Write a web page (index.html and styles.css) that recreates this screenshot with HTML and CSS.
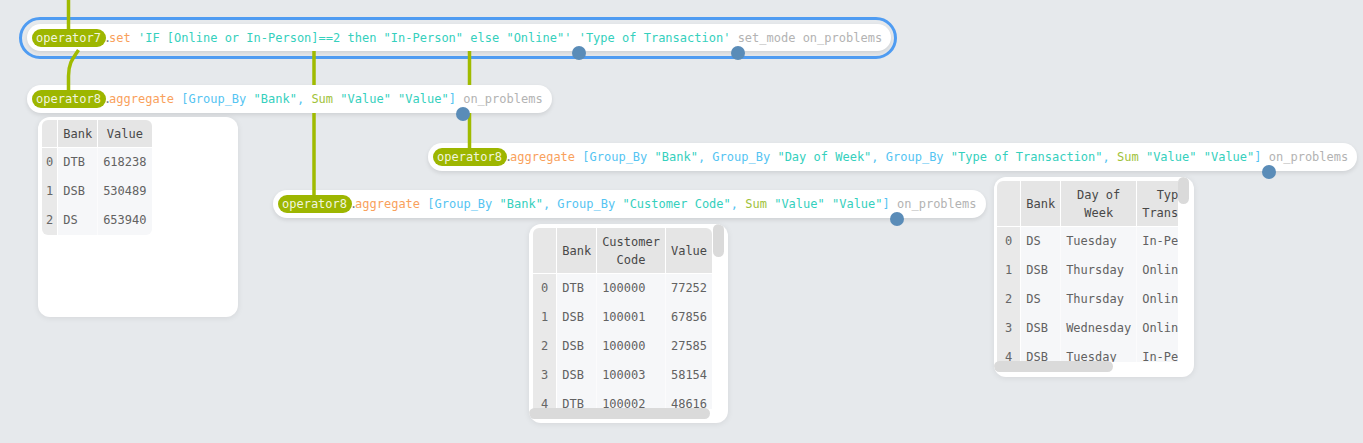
FILE: index.html
```html
<!DOCTYPE html>
<html>
<head>
<meta charset="utf-8">
<title>Graph</title>
<link rel="stylesheet" href="styles.css">
</head>
<body>
<div class="canvas">
  <div class="ring"></div>
  <svg class="edges" width="1363" height="443" viewBox="0 0 1363 443">
    <path d="M68.5 0 V32"/>
    <path d="M78.5 50 C74 57 68.5 62 68.5 76 V93"/>
    <path d="M314 51 V85 M314 113 V197"/>
    <path d="M469.5 51 V85 M469.5 113 V150"/>
  </svg>

  <div class="node n7"><span class="label">operator7</span><span class="dot">.</span><span class="code"><span class="kw">set</span> <span class="str">'IF [Online or In-Person]==2 then "In-Person" else "Online"'</span> <span class="port"></span><span class="str">'Type of Transaction'</span> <span class="port"></span><span class="mute">set_mode on_problems</span></span></div>

  <div class="node n8a"><span class="label">operator8</span><span class="dot">.</span><span class="code"><span class="kw">aggregate</span> <span class="br">[Group_By</span> <span class="str">"Bank"</span><span class="br">, </span><span class="sum">Sum</span> <span class="str">"Value"</span> <span class="str">"Value"</span><span class="br">]</span> <span class="port"></span><span class="mute">on_problems</span></span></div>

  <div class="node n8b"><span class="label">operator8</span><span class="dot">.</span><span class="code"><span class="kw">aggregate</span> <span class="br">[Group_By</span> <span class="str">"Bank"</span><span class="br">, Group_By</span> <span class="str">"Day of Week"</span><span class="br">, Group_By</span> <span class="str">"Type of Transaction"</span><span class="br">, </span><span class="sum">Sum</span> <span class="str">"Value"</span> <span class="str">"Value"</span><span class="br">]</span> <span class="port"></span><span class="mute">on_problems</span></span></div>

  <div class="node n8c"><span class="label">operator8</span><span class="dot">.</span><span class="code"><span class="kw">aggregate</span> <span class="br">[Group_By</span> <span class="str">"Bank"</span><span class="br">, Group_By</span> <span class="str">"Customer Code"</span><span class="br">, </span><span class="sum">Sum</span> <span class="str">"Value"</span> <span class="str">"Value"</span><span class="br">]</span> <span class="port"></span><span class="mute">on_problems</span></span></div>

  <div class="card c1">
    <table class="df">
      <thead><tr><th class="idx"></th><th>Bank</th><th>Value</th></tr></thead>
      <tbody>
        <tr><td class="idx">0</td><td>DTB</td><td>618238</td></tr>
        <tr><td class="idx">1</td><td>DSB</td><td>530489</td></tr>
        <tr><td class="idx">2</td><td>DS</td><td>653940</td></tr>
      </tbody>
    </table>
  </div>

  <div class="card c2">
    <div class="clip">
      <table class="df multi">
        <thead><tr><th class="idx"></th><th>Bank</th><th>Customer Code</th><th>Value</th></tr></thead>
        <tbody>
          <tr><td class="idx">0</td><td>DTB</td><td>100000</td><td>77252</td></tr>
          <tr><td class="idx">1</td><td>DSB</td><td>100001</td><td>67856</td></tr>
          <tr><td class="idx">2</td><td>DSB</td><td>100000</td><td>27585</td></tr>
          <tr><td class="idx">3</td><td>DSB</td><td>100003</td><td>58154</td></tr>
          <tr><td class="idx">4</td><td>DTB</td><td>100002</td><td>48616</td></tr>
        </tbody>
      </table>
    </div>
    <div class="vthumb" style="height:33px"></div>
    <div class="hthumb" style="width:181px"></div>
  </div>

  <div class="card c3">
    <div class="clip">
      <table class="df multi">
        <thead><tr><th class="idx"></th><th>Bank</th><th>Day of Week</th><th>Type of Transaction</th></tr></thead>
        <tbody>
          <tr><td class="idx">0</td><td>DS</td><td>Tuesday</td><td>In-Person</td></tr>
          <tr><td class="idx">1</td><td>DSB</td><td>Thursday</td><td>Online</td></tr>
          <tr><td class="idx">2</td><td>DS</td><td>Thursday</td><td>Online</td></tr>
          <tr><td class="idx">3</td><td>DSB</td><td>Wednesday</td><td>Online</td></tr>
          <tr><td class="idx">4</td><td>DSB</td><td>Tuesday</td><td>In-Person</td></tr>
        </tbody>
      </table>
    </div>
    <div class="vthumb" style="height:27px"></div>
    <div class="hthumb" style="width:119px"></div>
  </div>
</div>
</body>
</html>
```

FILE: styles.css
```css
html, body {
  margin: 0;
  padding: 0;
  background: #e6e9ec;
}

.canvas {
  position: relative;
  width: 1363px;
  height: 443px;
  overflow: hidden;
  background: #e6e9ec;
  font-family: "DejaVu Sans Mono", monospace;
  font-size: 12px;
}

/* selection ring of the selected node */
.ring {
  position: absolute;
  left: 19px;
  top: 17px;
  width: 872px;
  height: 36px;
  border: 3px solid #4f9cf2;
  border-radius: 21px;
}

.edges {
  position: absolute;
  left: 0;
  top: 0;
  z-index: 2;
}

.edges path {
  fill: none;
  stroke: #a0bb00;
  stroke-width: 3.5;
}

/* nodes */
.node {
  position: absolute;
  display: flex;
  align-items: center;
  height: 28px;
  padding: 0 9px 0 5px;
  background: #ffffff;
  border-radius: 14px;
  box-shadow: 0 2px 4px rgba(0, 0, 0, 0.1);
  white-space: nowrap;
}

.n7 { left: 27px; top: 24px; height: 27px; }
.n8a { left: 27px; top: 85px; }
.n8b { left: 428px; top: 143px; }
.n8c { left: 273px; top: 190px; }

.label {
  position: relative;
  z-index: 3;
  height: 18px;
  line-height: 18px;
  padding: 0 5px 0 4px;
  border-radius: 9px;
  background: #9db600;
  color: #f1f5de;
}

.dot {
  width: 3px;
  text-indent: -2px;
  color: #7a7a7a;
  overflow: visible;
}

.code {
  white-space: pre;
  color: #35d0bd;
}

.kw { color: #f9a15c; }
.str { color: #35d0bd; }
.br { color: #55c4f2; }
.sum { color: #9fc23a; }
.mute { color: #b3b3b3; }

.port {
  position: relative;
  z-index: 3;
  display: inline-block;
  width: 0;
  height: 0;
  vertical-align: middle;
}

.port::after {
  content: "";
  position: absolute;
  left: -7px;
  top: 7.5px;
  width: 14px;
  height: 14px;
  border-radius: 50%;
  background: #5a8cb8;
}

/* visualization cards */
.card {
  position: absolute;
  background: #ffffff;
  border-radius: 12px;
  box-shadow: 0 1px 6px rgba(0, 0, 0, 0.08);
  box-sizing: border-box;
  overflow: hidden;
}

.c1 { left: 38px; top: 117px; width: 200px; height: 200px; padding: 3px 4px; }
.c2 { left: 529px; top: 224px; width: 199px; height: 199px; padding: 4px; }
.c3 { left: 994px; top: 177px; width: 200px; height: 200px; padding: 4px 3px; }

.clip {
  overflow: hidden;
  height: 181px;
}

.c2 .clip { width: 179px; }
.c3 .clip { width: 181px; }

.df {
  border-collapse: separate;
  border-spacing: 0;
  font-family: "DejaVu Sans Mono", monospace;
  font-size: 12px;
  line-height: 18px;
}

.df th {
  padding: 5px 5px 4px;
  background: #e5e5e5;
  color: #484848;
  font-weight: normal;
  text-align: center;
  border-right: 1px solid #ffffff;
  border-bottom: 1px solid #ffffff;
}

.df td {
  padding: 5px 5px 6px;
  background: #f6f7f9;
  color: #626262;
  text-align: left;
  white-space: nowrap;
  border-right: 1px solid #fbfbfc;
}

.df th:last-child,
.df td:last-child {
  border-right: none;
}

.df .idx {
  padding-left: 4px;
  padding-right: 4px;
  background: #e9e9e9;
  color: #666666;
  text-align: center;
}

.df td.idx { border-right: 1px solid #ffffff; }

.df th.idx { background: #e7e7e7; }

.df.multi .idx {
  padding-left: 8px;
  padding-right: 8px;
}

.df thead th:first-child { border-top-left-radius: 6px; }
.df thead th:last-child { border-top-right-radius: 6px; }
.df tbody tr:last-child td:first-child { border-bottom-left-radius: 6px; }
.df tbody tr:last-child td:last-child { border-bottom-right-radius: 6px; }

.vthumb {
  position: absolute;
  top: 0;
  right: 4px;
  width: 11px;
  border-radius: 6px;
  background: #dadada;
}

.c3 .vthumb { right: 5px; }

.hthumb {
  position: absolute;
  left: 0;
  bottom: 4px;
  height: 11px;
  border-radius: 6px;
  background: #dadada;
}

.c3 .hthumb { bottom: 5px; }
```
